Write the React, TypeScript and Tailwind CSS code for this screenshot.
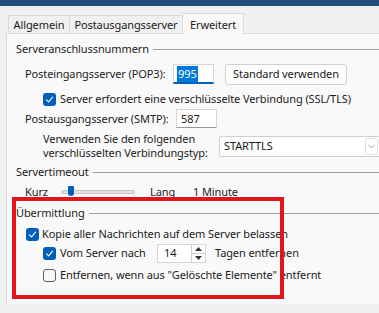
import { ChevronDown } from "lucide-react";

function Check({ checked = false }: { checked?: boolean }) {
  return checked ? (
    <span className="flex h-[13px] w-[13px] shrink-0 items-center justify-center rounded-[3px] bg-[#005fb8]">
      <svg width="9" height="9" viewBox="0 0 9 9" fill="none">
        <path d="M1.5 4.8 L3.6 6.8 L7.6 2.2" stroke="white" strokeWidth="1.1" strokeLinecap="round" strokeLinejoin="round" />
      </svg>
    </span>
  ) : (
    <span className="h-[13px] w-[13px] shrink-0 rounded-[3px] border border-[#5f5f5f] bg-[#f7f7f7]" />
  );
}

function GroupHeader({ label }: { label: string }) {
  return (
    <div className="flex h-4 items-center">
      <span className="whitespace-nowrap">{label}</span>
      <div className="ml-[4px] h-px flex-1 bg-[#a0a0a0]" />
    </div>
  );
}

export default function App() {
  return (
    <div className="relative h-[313px] w-[379px] overflow-hidden bg-[#f0f0f0] font-['Noto_Sans',sans-serif] text-[11px] leading-4 tracking-[-0.1px] text-[#1b1b1b]">
      {/* window title strip */}
      <div className="h-[6px] bg-[#1f4f7b]" />

      {/* tabs */}
      <div className="mt-[4px] flex h-[23px] items-end pl-[8px]">
        <div className="flex h-[18px] w-[62px] items-center justify-center whitespace-nowrap border border-b-0 border-[#dadada] bg-[#f0f0f0]">Allgemein</div>
        <div className="flex h-[18px] w-[113px] items-center justify-center whitespace-nowrap border border-b-0 border-l-0 border-[#dadada] bg-[#f0f0f0]">Postausgangsserver</div>
        <div className="relative -mb-px flex h-[21px] w-[61px] items-start justify-center whitespace-nowrap border border-b-0 border-l-0 border-[#dadada] bg-[#f9f9f9] pt-[3px]">Erweitert</div>
      </div>

      {/* panel */}
      <div className="ml-[6px] h-[271px] w-[420px] border-l border-t border-[#dadada] bg-[#f9f9f9] pl-[9px] pt-[7px]">
        <GroupHeader label="Serveranschlussnummern" />

        <div className="mt-[7px] flex h-[20px] items-center pl-[9px]">
          <span className="w-[148px] whitespace-nowrap">Posteingangsserver (POP3):</span>
          <div className="flex h-[20px] w-[41px] items-center border border-b-2 border-[#d6d6d6] border-b-[#005fb8] bg-white pl-[3px]">
            <span className="bg-[#0078d7] px-px text-white">995</span>
          </div>
          <button className="ml-[11px] flex h-[21px] w-[122px] items-center justify-center whitespace-nowrap rounded-[3px] border border-[#d0d0d0] bg-[#fdfdfd]">Standard verwenden</button>
        </div>

        <div className="mt-[7px] flex h-4 items-center gap-[4px] pl-[27px]">
          <Check checked />
          <span className="whitespace-nowrap">Server erfordert eine verschlüsselte Verbindung (SSL/TLS)</span>
        </div>

        <div className="mt-[2px] flex h-[19px] items-center pl-[9px]">
          <span className="w-[151px] whitespace-nowrap">Postausgangsserver (SMTP):</span>
          <div className="flex h-[19px] w-[41px] items-center border border-[#d6d6d6] border-b-[#9a9a9a] bg-white pl-[4px]">587</div>
        </div>

        <div className="mt-[4px] flex h-[28px] items-center pl-[27px]">
          <span className="w-[176px] whitespace-nowrap leading-[14px]">
            Verwenden Sie den folgenden
            <br />
            verschlüsselten Verbindungstyp:
          </span>
          <div className="flex h-[21px] w-[162px] shrink-0 items-center justify-between rounded-[2px] border border-[#cfcfcf] bg-white pl-[4px] pr-[2px]">
            <span>STARTTLS</span>
            <span className="flex h-[17px] w-[13px] items-center justify-center rounded-[2px] border border-[#e0e0e0]">
              <ChevronDown size={11} strokeWidth={1.3} className="text-[#555]" />
            </span>
          </div>
        </div>

        <div className="mt-[4px]">
          <GroupHeader label="Servertimeout" />
        </div>

        <div className="mt-[4px] flex h-4 items-center pl-[9px]">
          <span className="w-[36px]">Kurz</span>
          <div className="relative h-[4px] w-[74px] rounded-full border border-[#c4c4c4] bg-[#e1e1e1]">
            <div className="absolute left-[6px] top-[-5px] h-[10px] w-[6px] rounded-b-[3px] rounded-t-[1px] bg-[#005fb8]" />
          </div>
          <span className="ml-[15px] w-[43px]">Lang</span>
          <span className="whitespace-nowrap">1 Minute</span>
        </div>

        <div className="mt-[5px]">
          <GroupHeader label="Übermittlung" />
        </div>

        <div className="mt-[5px] flex h-4 items-center gap-[3px] pl-[10px]">
          <Check checked />
          <span className="whitespace-nowrap">Kopie aller Nachrichten auf dem Server belassen</span>
        </div>

        <div className="mt-[1px] flex h-[20px] items-center pl-[27px]">
          <Check checked />
          <span className="ml-[4px] w-[97px] whitespace-nowrap">Vom Server nach</span>
          <div className="flex h-[19px] items-stretch border border-[#d6d6d6] bg-white">
            <span className="flex w-[33px] items-center pl-[6px]">14</span>
            <div className="flex w-[14px] flex-col border-l border-[#cfcfcf]">
              <div className="flex flex-1 items-center justify-center border-b border-[#cfcfcf]">
                <svg width="7" height="4" viewBox="0 0 7 4"><path d="M0 4 L3.5 0 L7 4 Z" fill="#333" /></svg>
              </div>
              <div className="flex flex-1 items-center justify-center">
                <svg width="7" height="4" viewBox="0 0 7 4"><path d="M0 0 L3.5 4 L7 0 Z" fill="#333" /></svg>
              </div>
            </div>
          </div>
          <span className="ml-[9px] whitespace-nowrap">Tagen entfernen</span>
        </div>

        <div className="mt-[4px] flex h-4 items-center gap-[4px] pl-[27px]">
          <Check />
          <span className="whitespace-nowrap">Entfernen, wenn aus "Gelöschte Elemente" entfernt</span>
        </div>
      </div>

      {/* annotation frame */}
      <div className="absolute left-[12px] top-[197px] h-[102px] w-[272px] border-[4px] border-[#e3141b]" />
    </div>
  );
}
